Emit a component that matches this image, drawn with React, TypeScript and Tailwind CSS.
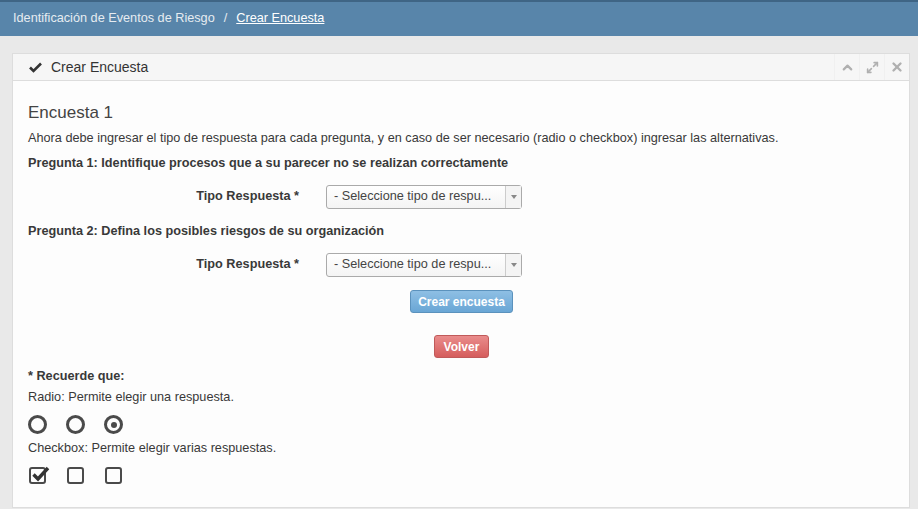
import { ChevronUp, Maximize2, X } from "lucide-react";

function Select() {
  return (
    <div className="flex h-[24px] w-[196px] items-center rounded-[3px] border border-[#aaaaaa] bg-gradient-to-b from-white to-[#f4f4f4] text-[#444]">
      <span className="flex-1 truncate pl-[7px]">- Seleccione tipo de respu...</span>
      <span className="flex h-full w-[16px] items-center justify-center border-l border-[#cccccc] bg-[#f4f4f4]">
        <svg width="6" height="4" viewBox="0 0 6 4"><path d="M0 0h6L3 4z" fill="#888" /></svg>
      </span>
    </div>
  );
}

function Radio({ checked }: { checked?: boolean }) {
  return (
    <span className="flex h-[19px] w-[19px] items-center justify-center rounded-full border-[3px] border-[#4a4a4a]">
      {checked && <span className="h-[6px] w-[6px] rounded-full bg-[#4a4a4a]" />}
    </span>
  );
}

function Check({ checked }: { checked?: boolean }) {
  return (
    <span className="relative flex h-[17px] w-[17px] items-center justify-center rounded-[3px] border-2 border-[#4a4a4a]">
      {checked && (
        <svg className="absolute left-[1px] top-[-3px]" width="18" height="16" viewBox="0 0 18 16">
          <path d="M1.5 8.5l4.5 4.5L16 2" stroke="#333" strokeWidth="3.4" fill="none" strokeLinejoin="miter" />
        </svg>
      )}
    </span>
  );
}

export default function App() {
  return (
    <div className="min-h-[509px] bg-[#e9e9e9] font-['Liberation_Sans',Arial,sans-serif] text-[12.7px] text-[#393939]">
      <div className="flex h-[36px] items-center border-t-2 border-[#3f6585] bg-[#5885aa] pl-[13px] text-[12.7px] text-[#e6ecf1]">
        <span>Identificación de Eventos de Riesgo</span>
        <span className="mx-[9px] text-[#e6ecf1]">/</span>
        <span className="text-white underline">Crear Encuesta</span>
      </div>
      <div className="px-[12px] pt-[17px]">
        <div className="mr-[-4px] w-[898px] border border-[#dddddd] bg-[#fdfdfd]">
          <div className="flex h-[27px] items-center border-b border-[#dddddd] bg-[#f6f6f6]">
            <svg className="ml-[16px]" width="13" height="11" viewBox="0 0 13 11">
              <path d="M1 5.5l3.5 3.5L12 1.5" stroke="#333" strokeWidth="2.6" fill="none" />
            </svg>
            <span className="ml-[9px] text-[14px] text-[#333]">Crear Encuesta</span>
            <div className="ml-auto flex h-full">
              <span className="flex w-[25px] items-center justify-center border-l border-[#f0f0f0]">
                <ChevronUp size={15} strokeWidth={3.5} className="text-[#b0b0b0]" />
              </span>
              <span className="flex w-[25px] items-center justify-center border-l border-[#f0f0f0]">
                <Maximize2 size={13} strokeWidth={3} className="text-[#b0b0b0]" />
              </span>
              <span className="flex w-[25px] items-center justify-center border-l border-[#f0f0f0]">
                <X size={14} strokeWidth={4} className="text-[#b0b0b0]" />
              </span>
            </div>
          </div>
          <div className="px-[15px] pb-[23px] pt-[21px]">
            <div className="text-[17px] leading-[22px] text-[#444]">Encuesta 1</div>
            <p className="mt-[6px] leading-[16px]">
              Ahora debe ingresar el tipo de respuesta para cada pregunta, y en caso de ser necesario (radio o checkbox) ingresar las alternativas.
            </p>
            <p className="mt-[9px] font-bold leading-[16px]">Pregunta 1: Identifique procesos que a su parecer no se realizan correctamente</p>
            <div className="mt-[14px] flex items-center">
              <span className="w-[298px] pr-[27px] text-right font-bold">Tipo Respuesta *</span>
              <Select />
            </div>
            <p className="mt-[14px] font-bold leading-[16px]">Pregunta 2: Defina los posibles riesgos de su organización</p>
            <div className="mt-[14px] flex items-center">
              <span className="w-[298px] pr-[27px] text-right font-bold">Tipo Respuesta *</span>
              <Select />
            </div>
            <div className="mt-[13px] flex justify-center pl-[1px]">
              <button className="h-[23px] w-[103px] rounded-[3px] border border-[#5b92bd] bg-gradient-to-b from-[#8ebfe4] to-[#69a6d5] text-[12px] font-bold text-white">
                Crear encuesta
              </button>
            </div>
            <div className="mt-[22px] flex justify-center pl-[1px]">
              <button className="h-[23px] w-[55px] rounded-[3px] border border-[#c05a5a] bg-gradient-to-b from-[#e98c8c] to-[#d55d5d] text-[12px] font-bold text-white">
                Volver
              </button>
            </div>
            <p className="mt-[10px] font-bold leading-[16px]">* Recuerde que:</p>
            <p className="mt-[5px] leading-[16px]">Radio: Permite elegir una respuesta.</p>
            <div className="mt-[10px] flex gap-[19px]">
              <Radio />
              <Radio />
              <Radio checked />
            </div>
            <p className="mt-[6px] leading-[16px]">Checkbox: Permite elegir varias respuestas.</p>
            <div className="mt-[11px] flex gap-[21px] pl-[1px]">
              <Check checked />
              <Check />
              <Check />
            </div>
          </div>
        </div>
      </div>
    </div>
  );
}
